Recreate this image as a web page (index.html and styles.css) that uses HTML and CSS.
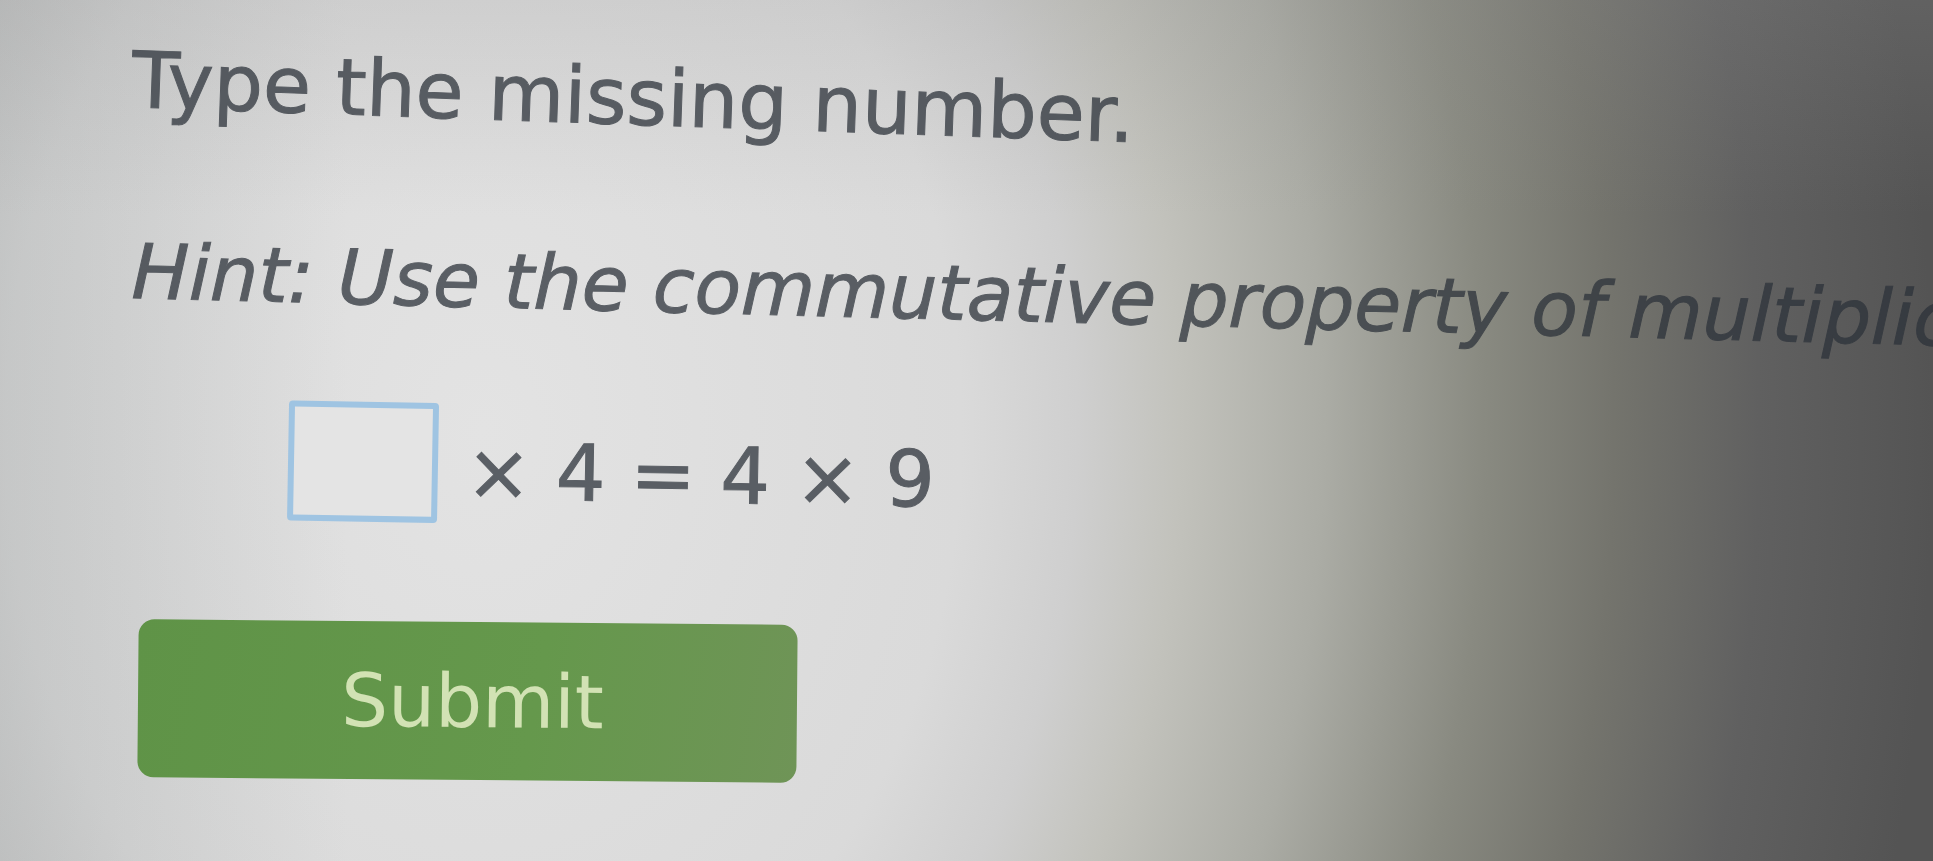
FILE: index.html
```
<!DOCTYPE html>
<html lang="en">
<head>
  <meta charset="UTF-8">
  <title>Type the missing number</title>
  <meta name="viewport" content="width=device-width, initial-scale=1.0">
  <link rel="stylesheet" href="styles.css">
</head>
<body>

  <form class="question">
    <h1 class="prompt">Type the missing number.</h1>

    <p class="hint">Hint: Use the commutative property of multiplication.</p>

    <div class="equation">
      <input type="text" class="answer" id="answer" inputmode="numeric" autocomplete="off" aria-label="Missing number">
      <label for="answer">× 4 = 4 × 9</label>
    </div>

    <button type="submit" class="btn-submit">Submit</button>
  </form>

  <script>
    document.querySelector(".question").addEventListener("submit", function (e) {
      e.preventDefault();
      document.getElementById("answer").focus();
    });
  </script>

</body>
</html>
```
FILE: styles.css
```
* { box-sizing: border-box; }

body {
  margin: 0;
  min-height: 100vh;
  overflow: hidden;
  background:
    linear-gradient(180deg, rgba(150, 150, 150, 0.2), rgba(160, 160, 160, 0) 25%),
    linear-gradient(90deg, rgba(150, 155, 155, 0.3), rgba(180, 180, 180, 0) 18%),
    radial-gradient(ellipse 75% 220% at 25% 50%, #e3e3e3 0%, #dadada 33%, #cfcfcf 41%, #c2c2bc 48%, #abaca5 58%, #898a81 69%, #74746d 78%, #606060 88%, #545454 100%);
  color: #2c323a;
  font-family: Verdana, "DejaVu Sans", sans-serif;
}

.question {
  display: flex;
  flex-direction: column;
  align-items: flex-start;
  padding: 32px 0 0 132px;
}

.prompt, .hint {
  margin: 0;
  font-weight: normal;
  line-height: 96px;
  white-space: nowrap;
  transform-origin: left center;
}

/* let the lighting of the background through the text */
.prompt, .hint, .equation label {
  opacity: 0.74;
  -webkit-text-stroke: 1px currentColor;
}

.prompt {
  font-size: 78px;
  transform: rotate(2deg);
}

.hint {
  margin-top: 96px;
  font-size: 76px;
  font-style: italic;
  transform: rotate(1.5deg);
}

.equation {
  display: flex;
  align-items: center;
  gap: 28px;
  margin: 86px 0 0 156px;
  font-size: 78px;
  transform: rotate(1deg);
}

.equation label {
  padding-top: 16px;
}

.answer {
  width: 150px;
  height: 120px;
  padding: 0 16px;
  border: 6px solid #9fc4e2;
  border-radius: 4px;
  background: #e4e4e4;
  color: inherit;
  font: inherit;
  text-align: center;
}

.btn-submit {
  width: 36.6%;
  min-width: 320px;
  height: 158px;
  margin: 96px 0 0 6px;
  padding-left: 16px;
  border: none;
  border-radius: 16px;
  background: linear-gradient(100deg, #5f9347, #65984c 60%, #6f9457);
  color: #d2e2b4;
  font: inherit;
  font-size: 74px;
  transform: rotate(0.5deg);
  cursor: pointer;
}
```
